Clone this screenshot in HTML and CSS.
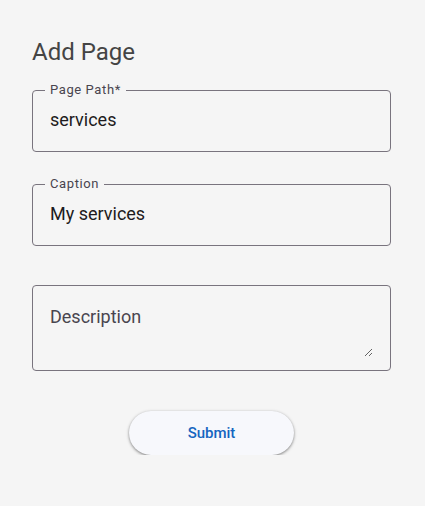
FILE: index.html
```html
<!DOCTYPE html>
<html lang="en">
<head>
<meta charset="utf-8">
<title>Add Page</title>
<link rel="stylesheet" href="styles.css">
</head>
<body>
<main class="page">
  <h1 class="title">Add Page</h1>
  <form class="form">
    <fieldset class="field">
      <legend class="field-label">Page Path*</legend>
      <input class="field-input" type="text" value="services">
    </fieldset>
    <fieldset class="field">
      <legend class="field-label">Caption</legend>
      <input class="field-input" type="text" value="My services">
    </fieldset>
    <fieldset class="field field-area">
      <legend class="field-label field-label-empty"></legend>
      <textarea class="field-textarea" placeholder="Description"></textarea>
    </fieldset>
    <div class="actions">
      <button class="submit" type="button">Submit</button>
    </div>
  </form>
</main>
</body>
</html>
```
FILE: styles.css
```css
html, body {
  margin: 0;
  padding: 0;
  background: #f5f5f5;
}
body {
  font-family: Roboto, "Liberation Sans", sans-serif;
  color: #1d1b20;
}
.page {
  width: 359px;
  padding: 36px 0 0 32px;
}
.title {
  margin: 0;
  font-size: 24px;
  line-height: 32px;
  font-weight: 400;
  color: #444444;
}
.form {
  display: flex;
  flex-direction: column;
  margin-top: 14px;
}
.field {
  margin: 0;
  padding: 0 0 0 12px;
  border: 1px solid #79747e;
  border-radius: 4px;
  min-width: 0;
}
.field + .field {
  margin-top: 24px;
}
.field-area {
  margin-top: 31px !important;
}
.field-label {
  padding: 0 5px;
  font-size: 13px;
  line-height: 16px;
  letter-spacing: 0.6px;
  color: #49454f;
}
.field-label-empty {
  padding: 0;
  width: 0;
  height: 16px;
}
.field-input {
  display: block;
  box-sizing: border-box;
  width: 100%;
  margin: 10px 0 19px;
  padding: 0 16px 0 5px;
  border: 0;
  outline: 0;
  background: transparent;
  font-family: inherit;
  font-size: 18px;
  line-height: 24px;
  color: #1d1b20;
}
.field-textarea {
  display: block;
  box-sizing: border-box;
  width: calc(100% - 17px);
  height: 64px;
  margin: 0 17px 13px 0;
  padding: 12px 0 0 5px;
  border: 0;
  outline: 0;
  background: transparent;
  resize: vertical;
  font-family: inherit;
  font-size: 18px;
  line-height: 24px;
  color: #1d1b20;
}
.field-textarea::placeholder {
  color: #49454f;
  opacity: 1;
}
.actions {
  display: flex;
  justify-content: center;
  margin-top: 40px;
}
.submit {
  width: 165px;
  height: 44px;
  border: 0;
  border-radius: 22px;
  background: #f7f8fc;
  color: #1565c0;
  font-family: inherit;
  font-size: 15px;
  font-weight: 500;
  box-shadow: 0 1px 2px rgba(0, 0, 0, 0.3), 0 1px 3px 1px rgba(0, 0, 0, 0.15);
  cursor: pointer;
}
```
